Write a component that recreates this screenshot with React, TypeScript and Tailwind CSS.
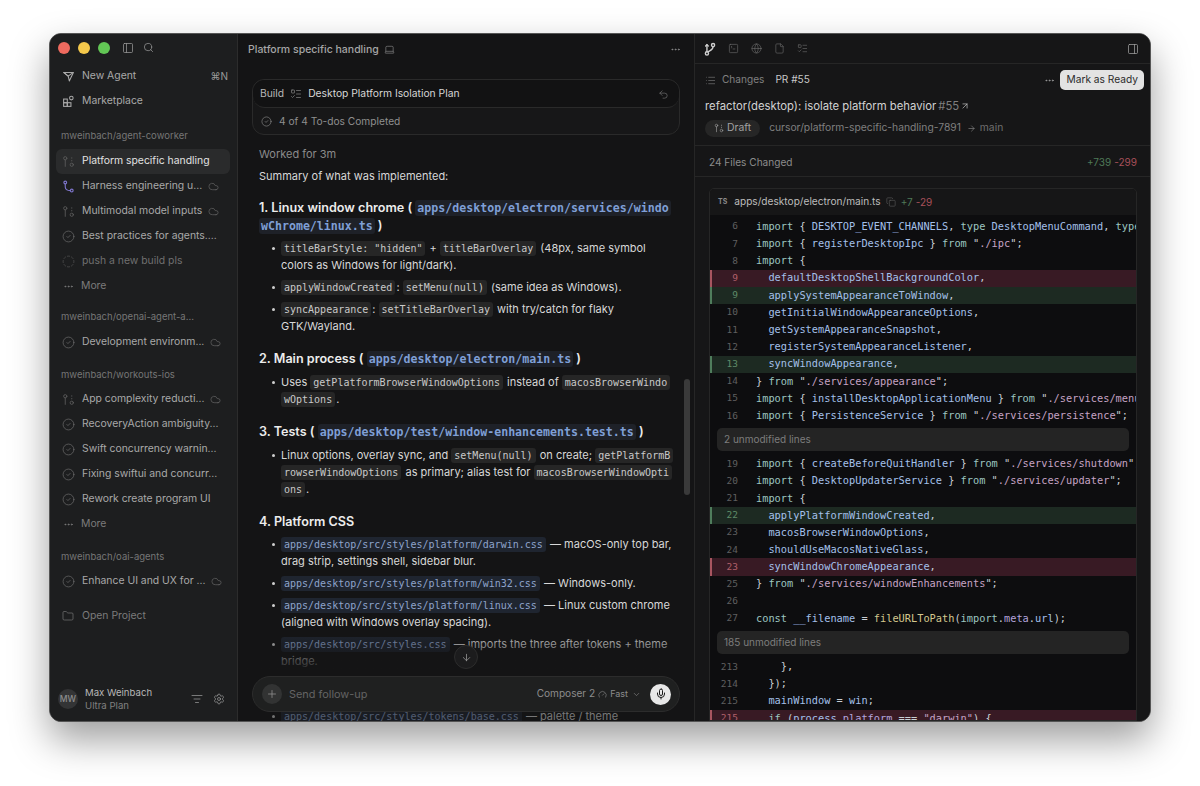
import { ReactNode } from 'react';
import {
  ArrowDown,
  ArrowRight,
  ArrowUpRight,
  ChevronDown,
  CircleCheck,
  CircleDashed,
  Cloud,
  Copy,
  Ellipsis,
  File,
  Folder,
  Gauge,
  Globe,
  GitPullRequestDraft,
  Laptop,
  List,
  ListFilter,
  ListTodo,
  Mic,
  PanelLeft,
  PanelRight,
  Plus,
  Search,
  Settings,
  SquareTerminal,
  Undo2,
} from 'lucide-react';

const mono = "font-['DejaVu_Sans_Mono',monospace]";

function AgentIcon() {
  return (
    <svg viewBox="0 0 16 16" className="w-[13px] h-[13px]" fill="none" stroke="currentColor" strokeWidth="1.3" strokeLinejoin="round">
      <path d="M2 3l12 0-5 10.5L7.6 7.6z" />
      <path d="M2 3l5.6 4.6L14 3" />
    </svg>
  );
}

function MarketIcon() {
  return (
    <svg viewBox="0 0 16 16" className="w-[13px] h-[13px]" fill="none" stroke="currentColor" strokeWidth="1.3">
      <rect x="2" y="5" width="4.5" height="4.5" />
      <rect x="2" y="9.5" width="4.5" height="4.5" />
      <rect x="6.5" y="9.5" width="4.5" height="4.5" />
      <circle cx="11.5" cy="3.8" r="2.2" />
    </svg>
  );
}

function BranchIcon() {
  return (
    <svg viewBox="0 0 16 16" className="w-[14px] h-[14px]" fill="none" stroke="currentColor" strokeWidth="1.6" strokeLinecap="round">
      <circle cx="4.5" cy="13" r="1.8" />
      <path d="M4.5 3v8" />
      <circle cx="11.5" cy="3.5" r="1.8" />
      <path d="M11.5 5.5c0 3.5-3 4-5.5 5.5" />
      <path d="M3 4.5L4.5 3 6 4.5" />
    </svg>
  );
}

function MergedIcon() {
  return (
    <svg viewBox="0 0 16 16" className="w-[13px] h-[13px] text-[#7d74c9]" fill="none" stroke="currentColor" strokeWidth="1.4">
      <circle cx="4" cy="3" r="1.7" />
      <circle cx="12" cy="13" r="1.7" />
      <path d="M4 4.8v3.7c0 2.8 2 4.5 6.2 4.5" />
    </svg>
  );
}

type Status = 'draft' | 'merged' | 'done' | 'pending';

function StatusIcon({ status }: { status: Status }) {
  if (status === 'draft') return <GitPullRequestDraft className="w-[13px] h-[13px] text-[#5f5f5f]" strokeWidth={1.5} />;
  if (status === 'merged') return <MergedIcon />;
  if (status === 'pending') return <CircleDashed className="w-[13px] h-[13px] text-[#555]" strokeWidth={1.3} />;
  return <CircleCheck className="w-[13px] h-[13px] text-[#737373]" strokeWidth={1.2} />;
}

function SideRow({ status, label, cloud, active, dim }: { status: Status; label: string; cloud?: boolean; active?: boolean; dim?: boolean }) {
  return (
    <div className={`h-[25px] flex items-center pl-[6px] pr-[8px] rounded-[6px] ${active ? 'bg-[#2a2b2c]' : ''}`}>
      <span className="w-[20px] flex shrink-0">
        <StatusIcon status={status} />
      </span>
      <span className={`text-[10.4px] whitespace-nowrap ${active ? 'text-[#e2e2e2]' : dim ? 'text-[#707070]' : 'text-[#a9a9a9]'}`}>{label}</span>
      {cloud && <Cloud className="w-[11px] h-[11px] text-[#6a6a6a] ml-[6px] shrink-0" strokeWidth={1.4} />}
    </div>
  );
}

function More() {
  return (
    <div className="h-[25px] flex items-center pl-[7px] text-[10.4px] text-[#7b7b7b]">
      <span className="w-[18px]">
        <Ellipsis className="w-[11px] h-[11px]" />
      </span>
      More
    </div>
  );
}

function GroupLabel({ children, className }: { children: ReactNode; className: string }) {
  return <div className={`pl-[5px] text-[9.5px] leading-[14px] text-[#767676] ${className}`}>{children}</div>;
}

function Sidebar() {
  return (
    <aside className="w-[188px] shrink-0 bg-[#1d1e1f] border-r border-[#2c2c2c] flex flex-col">
      <div className="h-[27px] flex items-center pl-[8px] shrink-0">
        <span className="w-[12px] h-[12px] rounded-full bg-[#ee6a5f]" />
        <span className="w-[12px] h-[12px] rounded-full bg-[#f4c84b] ml-[8px]" />
        <span className="w-[12px] h-[12px] rounded-full bg-[#62c655] ml-[8px]" />
        <PanelLeft className="w-[12px] h-[12px] text-[#9a9a9a] ml-[12px]" strokeWidth={1.5} />
        <Search className="w-[11px] h-[11px] text-[#9a9a9a] ml-[9px]" strokeWidth={1.6} />
      </div>
      <div className="pl-[6px] pr-[7px] pt-[2.5px] flex flex-col flex-1">
        <div className="h-[25px] flex items-center pl-[6px] pr-[2px] text-[#a9a9a9]">
          <span className="w-[20px]">
            <AgentIcon />
          </span>
          <span className="text-[10.4px] flex-1">New Agent</span>
          <span className="text-[10px] text-[#9a9a9a]">⌘N</span>
        </div>
        <div className="h-[25px] flex items-center pl-[6px] text-[#a9a9a9]">
          <span className="w-[20px]">
            <MarketIcon />
          </span>
          <span className="text-[10.4px]">Marketplace</span>
        </div>
        <GroupLabel className="mt-[15px] mb-[6px]">mweinbach/agent-coworker</GroupLabel>
        <SideRow status="draft" label="Platform specific handling" active />
        <SideRow status="merged" label="Harness engineering u..." cloud />
        <SideRow status="draft" label="Multimodal model inputs" cloud />
        <SideRow status="done" label="Best practices for agents...." />
        <SideRow status="pending" label="push a new build pls" dim />
        <More />
        <GroupLabel className="mt-[11px] mb-[6px]">mweinbach/openai-agent-a...</GroupLabel>
        <SideRow status="done" label="Development environm..." cloud />
        <GroupLabel className="mt-[13px] mb-[5px]">mweinbach/workouts-ios</GroupLabel>
        <SideRow status="draft" label="App complexity reducti..." cloud />
        <SideRow status="done" label="RecoveryAction ambiguity..." />
        <SideRow status="done" label="Swift concurrency warnin..." />
        <SideRow status="done" label="Fixing swiftui and concurr..." />
        <SideRow status="done" label="Rework create program UI" />
        <More />
        <GroupLabel className="mt-[13px] mb-[5px]">mweinbach/oai-agents</GroupLabel>
        <SideRow status="done" label="Enhance UI and UX for ..." cloud />
        <div className="h-[25px] mt-[10px] flex items-center pl-[6px] text-[10.4px] text-[#7b7b7b]">
          <span className="w-[20px]">
            <Folder className="w-[12px] h-[12px]" strokeWidth={1.3} />
          </span>
          Open Project
        </div>
      </div>
      <div className="h-[46px] flex items-center pl-[8px] pr-[12px] pt-[2px] shrink-0">
        <span className="w-[20px] h-[20px] rounded-full bg-[#333435] text-[#8e8e8e] text-[8.5px] font-medium flex items-center justify-center">MW</span>
        <div className="ml-[7px] flex-1">
          <div className="text-[9.6px] leading-[13px] text-[#b8b8b8]">Max Weinbach</div>
          <div className="text-[9.6px] leading-[13px] text-[#808080]">Ultra Plan</div>
        </div>
        <ListFilter className="w-[12px] h-[12px] text-[#a0a0a0]" strokeWidth={1.4} />
        <Settings className="w-[12px] h-[12px] text-[#a0a0a0] ml-[10px]" strokeWidth={1.4} />
      </div>
    </aside>
  );
}

function C({ children, blue }: { children: ReactNode; blue?: boolean }) {
  return (
    <code
      className={`${mono} text-[10px] leading-[12px] px-[3px] py-[2px] mr-[1px] rounded-[3px] break-all [box-decoration-break:clone] ${
        blue ? 'bg-[#1f2530] text-[#8ea3cb]' : 'bg-[#262626] text-[#c9c9c9]'
      }`}
    >
      {children}
    </code>
  );
}

function H({ children, className }: { children: ReactNode; className: string }) {
  return <h3 className={`text-[12.6px] leading-[18px] font-semibold text-[#ececec] ${className}`}>{children}</h3>;
}

function HL({ children }: { children: ReactNode }) {
  return (
    <code className={`${mono} text-[11.6px] leading-[14px] font-bold px-[2px] py-[1px] rounded-[3px] bg-[#1e2128] text-[#7f9fd6] break-all [box-decoration-break:clone]`}>
      {children}
    </code>
  );
}

function Li({ children }: { children: ReactNode }) {
  return (
    <li className="relative pl-[22px] mb-[5px] text-[11px] leading-[17px] text-[#d8d8d8]">
      <span className="absolute left-[13px] top-[7px] w-[3px] h-[3px] rounded-full bg-[#cfcfcf]" />
      {children}
    </li>
  );
}

function Chat() {
  return (
    <main className="w-[457px] shrink-0 relative bg-[#141415] border-r border-[#262626] overflow-hidden flex flex-col">
      <div className="h-[30px] flex items-center pl-[10px] pr-[13px] pt-[1px] shrink-0">
        <span className="text-[10.5px] font-medium text-[#a6a6a6]">Platform specific handling</span>
        <Laptop className="w-[11px] h-[11px] text-[#8a8a8a] ml-[5px]" strokeWidth={1.4} />
        <Ellipsis className="w-[11px] h-[11px] text-[#8a8a8a] ml-auto" />
      </div>
      <div className="mx-[14px] mt-[15px] rounded-[12px] border border-[#2a2a2a] shrink-0 bg-[#171718]">
        <div className="h-[28px] rounded-[12px] border-b border-[#2a2a2a] bg-[#121213] flex items-center px-[7px] pt-[1px]">
          <span className="text-[10.3px] text-[#b8b8b8]">Build</span>
          <ListTodo className="w-[12px] h-[12px] text-[#8e8e8e] ml-[6px]" strokeWidth={1.3} />
          <span className="text-[10.3px] text-[#d6d6d6] ml-[6px]">Desktop Platform Isolation Plan</span>
          <Undo2 className="w-[11px] h-[11px] text-[#787878] ml-auto mr-[3px]" strokeWidth={1.4} />
        </div>
        <div className="h-[26px] flex items-center pl-[8px] pt-[1px]">
          <CircleCheck className="w-[11px] h-[11px] text-[#8a8a8a]" strokeWidth={1.4} />
          <span className="text-[10.2px] text-[#8f8f8f] ml-[7px]">4 of 4 To-dos Completed</span>
        </div>
      </div>
      <div className="pl-[21px] pr-[21px] pt-[11px]">
        <div className="text-[11px] leading-[17px] text-[#8b8b8b]">Worked for 3m</div>
        <div className="text-[11px] leading-[17px] text-[#d8d8d8] mt-[5px]">Summary of what was implemented:</div>
        <H className="mt-[14px]">
          1. Linux window chrome ( <HL>apps/desktop/electron/services/windowChrome/linux.ts</HL> )
        </H>
        <ul className="mt-[5px]">
          <Li>
            <C>titleBarStyle: "hidden"</C> + <C>titleBarOverlay</C> (48px, same symbol colors as Windows for light/dark).
          </Li>
          <Li>
            <C>applyWindowCreated</C>: <C>setMenu(null)</C> (same idea as Windows).
          </Li>
          <Li>
            <C>syncAppearance</C>: <C>setTitleBarOverlay</C> with try/catch for flaky GTK/Wayland.
          </Li>
        </ul>
        <H className="mt-[15px]">
          2. Main process ( <HL>apps/desktop/electron/main.ts</HL> )
        </H>
        <ul className="mt-[6px]">
          <Li>
            Uses <C>getPlatformBrowserWindowOptions</C> instead of <C>macosBrowserWindowOptions</C>.
          </Li>
        </ul>
        <H className="mt-[15px]">
          3. Tests ( <HL>apps/desktop/test/window-enhancements.test.ts</HL> )
        </H>
        <ul className="mt-[6px]">
          <Li>
            Linux options, overlay sync, and <C>setMenu(null)</C> on create; <C>getPlatformBrowserWindowOptions</C> as primary; alias test for{' '}
            <C>macosBrowserWindowOptions</C>.
          </Li>
        </ul>
        <H className="mt-[15px]">4. Platform CSS</H>
        <ul className="mt-[5px]">
          <Li>
            <C blue>apps/desktop/src/styles/platform/darwin.css</C> — macOS-only top bar, drag strip, settings shell, sidebar blur.
          </Li>
          <Li>
            <C blue>apps/desktop/src/styles/platform/win32.css</C> — Windows-only.
          </Li>
          <Li>
            <C blue>apps/desktop/src/styles/platform/linux.css</C> — Linux custom chrome (aligned with Windows overlay spacing).
          </Li>
          <Li>
            <C blue>apps/desktop/src/styles.css</C> — imports the three after tokens + theme bridge.
          </Li>
        </ul>
        <ul className="mt-[38px] whitespace-nowrap opacity-50">
          <Li>
            <C blue>apps/desktop/src/styles/tokens/base.css</C> — palette / theme
          </Li>
        </ul>
      </div>
      {/* fade behind the composer */}
      <div className="absolute left-0 right-0 bottom-[46px] h-[48px] bg-gradient-to-b from-transparent to-[#141415]" />
      <div className="absolute left-0 right-0 bottom-[9px] h-[36px] bg-[#141415]" />
      <div className="absolute right-[4px] top-[345px] w-[6px] h-[116px] rounded-full bg-[#3a3a3a]" />
      <div className="absolute left-[216px] bottom-[52px] w-[24px] h-[24px] rounded-full bg-[#1c1c1d] border border-[#2c2c2c] flex items-center justify-center">
        <ArrowDown className="w-[11px] h-[11px] text-[#a0a0a0]" strokeWidth={1.6} />
      </div>
      <div className="absolute left-[14px] right-[14px] bottom-[9px] h-[36px] rounded-[18px] bg-[#1f2020] border border-[#2c2c2c] flex items-center pl-[9px] pr-[8px]">
        <span className="w-[20px] h-[20px] rounded-full bg-[#323333] flex items-center justify-center">
          <Plus className="w-[12px] h-[12px] text-[#8f8f8f]" strokeWidth={1.6} />
        </span>
        <span className="text-[10.9px] text-[#646464] ml-[7px]">Send follow-up</span>
        <span className="text-[10.1px] text-[#8c8c8c] ml-auto">Composer 2</span>
        <Gauge className="w-[9px] h-[9px] text-[#8c8c8c] ml-[3px]" strokeWidth={1.6} />
        <span className="text-[9px] text-[#8c8c8c] ml-[3px]">Fast</span>
        <ChevronDown className="w-[9px] h-[9px] text-[#8c8c8c] ml-[4px]" strokeWidth={1.6} />
        <span className="w-[21px] h-[21px] rounded-full bg-[#e8e8e8] flex items-center justify-center ml-[9px]">
          <Mic className="w-[12px] h-[12px] text-[#1a1a1a]" strokeWidth={2} />
        </span>
      </div>
    </main>
  );
}

const kw = 'text-[#9cc6c0]';
const id = 'text-[#a4c0ea]';
const p = 'text-[#c9ced4]';
const str = 'text-[#c6a3c4]';
const fn = 'text-[#d4c88e]';
const mem = 'text-[#b3a4dc]';

type Tok = [string, string];
type Row = { n: number; kind?: 'add' | 'del'; toks: Tok[] } | { fold: string };

const imp = (name: string, from: string): Tok[] => [
  ['import ', kw],
  ['{ ', p],
  [name, id],
  [' } ', p],
  ['from ', kw],
  ['"', p],
  [from, str],
  ['";', p],
];
const item = (name: string): Tok[] => [
  ['  ' + name, id],
  [',', p],
];
const close = (from: string): Tok[] => [
  ['} ', p],
  ['from ', kw],
  ['"', p],
  [from, str],
  ['";', p],
];

const rows: Row[] = [
  {
    n: 6,
    toks: [
      ['import ', kw],
      ['{ ', p],
      ['DESKTOP_EVENT_CHANNELS', id],
      [', ', p],
      ['type ', kw],
      ['DesktopMenuCommand', id],
      [', ', p],
      ['type DesktopMenuEvent', kw],
    ],
  },
  { n: 7, toks: imp('registerDesktopIpc', './ipc') },
  { n: 8, toks: [['import ', kw], ['{', p]] },
  { n: 9, kind: 'del', toks: item('defaultDesktopShellBackgroundColor') },
  { n: 9, kind: 'add', toks: item('applySystemAppearanceToWindow') },
  { n: 10, toks: item('getInitialWindowAppearanceOptions') },
  { n: 11, toks: item('getSystemAppearanceSnapshot') },
  { n: 12, toks: item('registerSystemAppearanceListener') },
  { n: 13, kind: 'add', toks: item('syncWindowAppearance') },
  { n: 14, toks: close('./services/appearance') },
  { n: 15, toks: imp('installDesktopApplicationMenu', './services/menu') },
  { n: 16, toks: imp('PersistenceService', './services/persistence') },
  { fold: '2 unmodified lines' },
  { n: 19, toks: imp('createBeforeQuitHandler', './services/shutdown') },
  { n: 20, toks: imp('DesktopUpdaterService', './services/updater') },
  { n: 21, toks: [['import ', kw], ['{', p]] },
  { n: 22, kind: 'add', toks: item('applyPlatformWindowCreated') },
  { n: 23, toks: item('macosBrowserWindowOptions') },
  { n: 24, toks: item('shouldUseMacosNativeGlass') },
  { n: 23, kind: 'del', toks: item('syncWindowChromeAppearance') },
  { n: 25, toks: close('./services/windowEnhancements') },
  { n: 26, toks: [] },
  {
    n: 27,
    toks: [
      ['const ', kw],
      ['__filename', id],
      [' = ', p],
      ['fileURLToPath', fn],
      ['(', p],
      ['import', kw],
      ['.', p],
      ['meta', mem],
      ['.', p],
      ['url', id],
      [');', p],
    ],
  },
  { fold: '185 unmodified lines' },
  { n: 213, toks: [['    },', p]] },
  { n: 214, toks: [['  });', p]] },
  { n: 215, toks: [['  mainWindow', id], [' = ', p], ['win', id], [';', p]] },
  {
    n: 215,
    kind: 'del',
    toks: [
      ['  if ', kw],
      ['(', p],
      ['process', id],
      ['.', p],
      ['platform', mem],
      [' === ', p],
      ['"darwin"', str],
      [') {', p],
    ],
  },
];

function DiffRow({ row }: { row: Row }) {
  if ('fold' in row) {
    return (
      <div className="mx-[7px] my-[4px] h-[23px] rounded-[5px] bg-[#242424] flex items-center pl-[7px] text-[10px] text-[#7d7d7d]">{row.fold}</div>
    );
  }
  const bg = row.kind === 'add' ? 'bg-[#1d2a22]' : row.kind === 'del' ? 'bg-[#381a24]' : '';
  const bar = row.kind === 'add' ? 'border-[#4f7d5c]' : row.kind === 'del' ? 'border-[#a85560]' : 'border-transparent';
  const num = row.kind === 'add' ? 'text-[#5f8a68]' : row.kind === 'del' ? 'text-[#b0606a]' : 'text-[#5f5f5f]';
  return (
    <div className={`h-[17.2px] flex items-center border-l-2 whitespace-pre ${mono} text-[10.3px] ${bg} ${bar}`}>
      <span className={`w-[26px] text-right text-[9.5px] shrink-0 ${num}`}>{row.n}</span>
      <span className="pl-[18px]">
        {row.toks.map((t, i) => (
          <span key={i} className={t[1]}>
            {t[0]}
          </span>
        ))}
      </span>
    </div>
  );
}

function Review() {
  return (
    <section className="flex-1 min-w-0 bg-[#161617] flex flex-col overflow-hidden">
      <div className="h-[30px] border-b border-[#262626] flex items-center pl-[8px] pr-[11px] shrink-0">
        <span className="text-[#cfcfcf]">
          <BranchIcon />
        </span>
        <SquareTerminal className="w-[11px] h-[11px] text-[#6f6f6f] ml-[11px]" strokeWidth={1.3} />
        <Globe className="w-[11px] h-[11px] text-[#6f6f6f] ml-[12px]" strokeWidth={1.3} />
        <File className="w-[11px] h-[11px] text-[#6f6f6f] ml-[12px]" strokeWidth={1.3} />
        <ListTodo className="w-[11px] h-[11px] text-[#6f6f6f] ml-[12px]" strokeWidth={1.3} />
        <PanelRight className="w-[12px] h-[12px] text-[#a0a0a0] ml-auto" strokeWidth={1.5} />
      </div>
      <div className="h-[30px] flex items-center pl-[10px] pr-[6px] pt-[2px] shrink-0">
        <List className="w-[11px] h-[11px] text-[#7a7a7a]" strokeWidth={1.4} />
        <span className="text-[10.1px] text-[#808080] ml-[6px]">Changes</span>
        <span className="text-[10.1px] text-[#c8c8c8] ml-[11px]">PR #55</span>
        <Ellipsis className="w-[11px] h-[11px] text-[#9a9a9a] ml-auto" />
        <span className="ml-[5px] h-[20px] px-[6px] rounded-[5px] bg-[#e3e3e3] text-[#2a2a2a] text-[10.2px] flex items-center">Mark as Ready</span>
      </div>
      <div className="h-[21px] flex items-center pl-[10px] pt-[3px] shrink-0 text-[11.3px] text-[#d2d2d2]">
        refactor(desktop): isolate platform behavior
        <span className="text-[#7f7f7f] ml-[2px]">#55</span>
        <ArrowUpRight className="w-[10px] h-[10px] text-[#c8c8c8] ml-[1px]" strokeWidth={1.6} />
      </div>
      <div className="h-[26px] flex items-center pl-[10px] shrink-0">
        <span className="h-[17px] px-[9px] rounded-full bg-[#262626] flex items-center text-[10.4px] text-[#a2a2a2]">
          <GitPullRequestDraft className="w-[10px] h-[10px] mr-[3px]" strokeWidth={1.5} />
          Draft
        </span>
        <span className="text-[10.3px] text-[#7f7f7f] ml-[9px]">cursor/platform-specific-handling-7891</span>
        <ArrowRight className="w-[9px] h-[9px] text-[#8f8f8f] ml-[6px]" strokeWidth={1.6} />
        <span className="text-[10.3px] text-[#6e6e6e] ml-[4px]">main</span>
      </div>
      <div className="mt-[4px] h-[32px] border-y border-[#262626] flex items-center pl-[14px] pr-[13px] pt-[3px] shrink-0">
        <span className="text-[10.1px] text-[#8c8c8c]">24 Files Changed</span>
        <span className="text-[10px] text-[#4f7a58] ml-auto">+739</span>
        <span className="text-[10px] text-[#a8505a] ml-[3px]">-299</span>
      </div>
      <div className="ml-[14px] mr-[13px] mt-[11px] rounded-t-[5px] border border-[#262626] flex-1 overflow-hidden">
        <div className="h-[26px] bg-[#161617] flex items-center pl-[8px]">
          <span className="text-[7px] font-bold text-[#8a8a8a]">TS</span>
          <span className="text-[10.15px] text-[#bcbcbc] ml-[7px]">apps/desktop/electron/main.ts</span>
          <Copy className="w-[10px] h-[10px] text-[#5f5f5f] ml-[5px]" strokeWidth={1.4} />
          <span className="text-[10px] text-[#4f7a58] ml-[5px]">+7</span>
          <span className="text-[10px] text-[#a8505a] ml-[3px]">-29</span>
        </div>
        <div className="bg-[#0d0d0f] pt-[3px] overflow-hidden h-full">
          {rows.map((r, i) => (
            <DiffRow key={i} row={r} />
          ))}
        </div>
      </div>
    </section>
  );
}

export default function App() {
  return (
    <div className="w-[1200px] h-[786px] bg-white pt-[33px] pl-[49px] overflow-hidden font-['Inter',sans-serif]">
      <div className="w-[1102px] h-[689px] rounded-[12px] overflow-hidden flex border border-[#555] bg-[#161617] shadow-[0_18px_38px_rgba(0,0,0,0.38)]">
        <Sidebar />
        <Chat />
        <Review />
      </div>
    </div>
  );
}
